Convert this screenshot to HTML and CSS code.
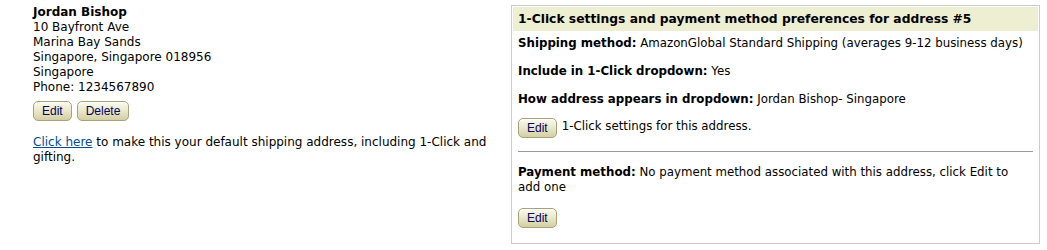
FILE: index.html
```html
<!DOCTYPE html>
<html lang="en">
<head>
  <meta charset="UTF-8">
  <title>Your Addresses</title>
  <link rel="stylesheet" href="styles.css">
</head>
<body>
  <div class="page">
    <!-- Address column -->
    <div class="address-col">
      <div class="address">
        <b>Jordan Bishop</b><br>
        10 Bayfront Ave<br>
        Marina Bay Sands<br>
        Singapore, Singapore 018956<br>
        Singapore<br>
        Phone: 1234567890
      </div>
      <div class="btn-row">
        <button type="button" class="btn">Edit</button>
        <button type="button" class="btn">Delete</button>
      </div>
      <p class="default-note"><a href="#">Click here</a> to make this your default shipping address, including 1-Click and gifting.</p>
    </div>

    <!-- 1-Click preferences box -->
    <div class="prefs-box">
      <div class="prefs-head">1-Click settings and payment method preferences for address #5</div>
      <div class="prefs-body">
        <p class="pref"><b>Shipping method:</b> AmazonGlobal Standard Shipping (averages 9-12 business days)</p>
        <p class="pref"><b>Include in 1-Click dropdown:</b> Yes</p>
        <p class="pref"><b>How address appears in dropdown:</b> Jordan Bishop- Singapore</p>
        <div class="pref-edit">
          <button type="button" class="btn">Edit</button>
          <span>1-Click settings for this address.</span>
        </div>
        <hr class="sep">
        <p class="pref"><b>Payment method:</b> No payment method associated with this address, click Edit to add one</p>
        <button type="button" class="btn">Edit</button>
      </div>
    </div>
  </div>
</body>
</html>
```

FILE: styles.css
```css
* { box-sizing: border-box; }

body {
  margin: 0;
  font-family: "DejaVu Sans", Verdana, sans-serif;
  font-size: 12px;
  line-height: 15px;
  color: #000;
  background: #fff;
}

.page {
  display: flex;
  align-items: flex-start;
  padding-top: 5px;
}

.address-col {
  width: 511px;
  padding: 0 18px 0 33px;
}

.btn-row {
  display: flex;
  gap: 5px;
  margin-top: 6px;
}

.btn {
  height: 20px;
  padding: 0 8px;
  font-family: "Liberation Sans", Arial, sans-serif;
  font-size: 12px;
  color: #00005e;
  border: 1px solid #a6a27c;
  border-radius: 5px;
  background: linear-gradient(#fbfaee, #e8e5c6 55%, #d3cea2);
  box-shadow: inset 0 1px 0 #fff;
  cursor: pointer;
}

.default-note {
  margin: 14px 0 0;
}

.default-note a {
  color: #004b91;
}

.prefs-box {
  width: 529px;
  height: 239px;
  border: 1px solid #ccc;
  padding: 1px;
}

.prefs-head {
  background: #eeeed3;
  padding: 4px 5px;
  font-size: 12.3px;
  font-weight: bold;
  line-height: 16px;
}

.prefs-body {
  padding: 5px 5px 0 5px;
  font-size: 11.8px;
}

.pref {
  margin: 0 0 13px;
}

.pref-edit {
  display: flex;
  align-items: flex-start;
  gap: 5px;
  margin-top: -2px;
}

.pref-edit span {
  padding-top: 1px;
}

.sep {
  border: 0;
  border-top: 1px solid #999;
  margin: 13px 0;
}
```
